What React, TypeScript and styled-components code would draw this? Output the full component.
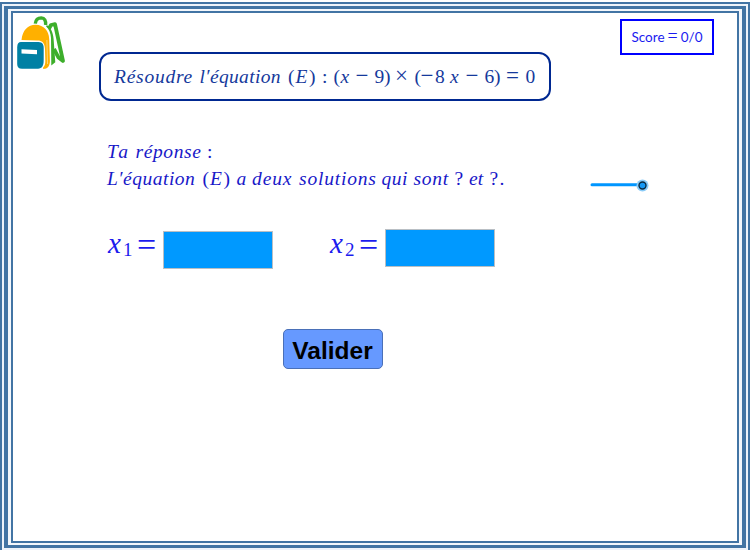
import React from "react";
import styled, { createGlobalStyle } from "styled-components";

const Global = createGlobalStyle`
  * { box-sizing: border-box; }
  body { margin: 0; background: #fff; overflow: hidden; }
`;

const OuterFrame = styled.div`
  width: 750px;
  height: 550px;
  padding-top: 2px;
  background: #fff;
`;
const OuterRule = styled.div`
  height: 548px;
  border: 2px solid #4274a4;
  border-bottom: 0;
  background: #eef3fa;
  padding: 2px 2px 0;
`;
const MiddleRule = styled.div`
  height: 542px;
  border: 4px solid #4274a4;
  border-top-width: 3px;
  border-bottom-width: 3px;
  background: #f3f7fc;
  padding: 2px 3px;
`;
const Page = styled.main`
  height: 532px;
  border: 2px solid #4274a4;
  background: #fff;
`;

const Header = styled.header`
  display: flex;
  align-items: flex-start;
  height: 121px;
`;
const Bag = styled.svg`
  width: 54px;
  height: 60px;
  flex: none;
`;
const Statement = styled.section`
  display: flex;
  align-items: center;
  width: 452px;
  height: 49px;
  margin: 39px 0 0 32px;
  padding: 0 0 3px 13px;
  border: 2px solid #002891;
  border-radius: 12px;
  color: #15399c;
  flex: none;
`;
const Score = styled.div`
  display: flex;
  justify-content: center;
  align-items: baseline;
  gap: 3px;
  width: 94px;
  height: 36px;
  margin: 6px 0 0 69px;
  border: 2px solid #0000ff;
  color: #1a1af0;
  font: 13.5px/30px Lato, sans-serif;
  white-space: nowrap;
`;
const ScoreSign = styled.span`
  font: 18px/30px "Liberation Serif", serif;
`;

const MathLine = styled.div`
  display: flex;
  align-items: baseline;
  height: 27px;
  font: italic 19.5px/27px "Liberation Serif", serif;
  white-space: nowrap;
`;
const Token = styled.span<{ $w: number; $ls?: number; $up?: boolean; $op?: boolean }>`
  flex: none;
  width: ${(p) => p.$w}px;
  letter-spacing: ${(p) => p.$ls ?? 0}px;
  font-style: ${(p) => (p.$up ? "normal" : "italic")};
  font-size: ${(p) => (p.$op ? 23 : 19.5)}px;
  margin-bottom: ${(p) => (p.$op ? -1 : 0)}px;
`;

const Answer = styled.section`
  display: flex;
  height: 62px;
  color: #1818c8;
`;
const AnswerText = styled.div`
  width: 577px;
  padding: 4px 0 0 94px;
`;
const Slider = styled.svg`
  width: 64px;
  height: 14px;
  margin-top: 44px;
`;

const Fields = styled.section`
  display: flex;
  height: 133px;
  padding: 32px 0 0 95px;
`;
const Field = styled.label<{ $w: number; $y: number; $rise: number }>`
  display: flex;
  width: ${(p) => p.$w}px;
  height: 38px;
  margin-top: ${(p) => p.$y}px;
  color: #1c1cee;
  font: italic 29px/29px "Liberation Serif", serif;

  > span {
    margin-top: -${(p) => p.$rise}px;
  }
`;
const Variable = styled.span`
  width: 15px;
`;
const Index = styled.span`
  width: 14px;
  padding-top: 8px;
  font: 19px/25px "Liberation Serif", serif;
`;
const Equals = styled.span`
  width: 26px;
  padding-top: 1px;
  font: 34px/29px "Liberation Serif", serif;
`;
const Entry = styled.input`
  width: 110px;
  height: 38px;
  padding: 0 6px;
  border: 1px solid #b9bfc4;
  border-radius: 0;
  outline: none;
  background: #0099ff;
  font: 20px "Liberation Sans", sans-serif;
`;
const Submit = styled.button`
  display: block;
  width: 100px;
  height: 40px;
  margin: 0 0 0 270px;
  padding: 4px 1px 0 0;
  border: 1px solid #4a70b8;
  border-radius: 5px;
  background: #6699ff;
  color: #000;
  font: bold 24.5px/34px "Liberation Sans", Arial, sans-serif;
`;

type Part = [text: string, width: number, spacing?: number, upright?: boolean];

const equation: Part[] = [
  ["Résoudre", 85.5, 0.75],
  ["l′équation", 88.5, 0.35],
  ["(", 7.5, 0, true],
  ["E", 13.5, 0],
  [")", 13, 0, true],
  [":", 11.5, 0, true],
  ["(", 7, 0, true],
  ["x", 15, 0],
  ["−", 19, 0, true],
  ["9", 9.5, 0, true],
  [")", 11, 0, true],
  ["×", 19.5, 0, true],
  ["(", 6, 0, true],
  ["−", 14.5, 0, true],
  ["8", 15, 0, true],
  ["x", 15.5, 0],
  ["−", 19, 0, true],
  ["6", 9.5, 0, true],
  [")", 12, 0, true],
  ["=", 19.5, 0, true],
  ["0", 10, 0, true],
];
const reply: Part[] = [
  ["Ta", 28.5, 2.2],
  ["réponse", 71.5, 0.6],
  [":", 8, 0, true],
];
const sentence: Part[] = [
  ["L′équation", 95.5, 0.5],
  ["(", 7.5, 0, true],
  ["E", 13.5, 0],
  [")", 13, 0, true],
  ["a", 15.5],
  ["deux", 47, 0.9],
  ["solutions", 82.5, 0.8],
  ["qui", 32, 0.5],
  ["sont", 41, 0.7],
  ["?", 14.5, 0, true],
  ["et", 20.5, 0.2],
  ["?", 10, 0, true],
  [".", 6, 0, true],
];

function MathText({ parts }: { parts: Part[] }) {
  return (
    <MathLine>
      {parts.map(([text, w, ls, up], i) => (
        <Token key={i} $w={w} $ls={ls} $up={up} $op={"−=×".includes(text)}>{text}</Token>
      ))}
    </MathLine>
  );
}

function Backpack() {
  return (
    <Bag viewBox="13 13 54 60">
      <path d="M35.3 23.6C35.8 19.5 38 17.9 41.3 17.9C44.6 18 46 20.5 45.6 25" fill="none" stroke="#3dae2b" strokeWidth="3.4" />
      <path d="M49 28.5L51 25L55 24.2L63 61L58.5 57.6L54 49" fill="none" stroke="#3dae2b" strokeWidth="3.8" strokeLinejoin="round" />
      <path d="M47 25.2C51 27.5 53.2 33 53.6 39L55.3 62.3L51.3 65.5L51 38C50.7 33 49 29 46 26.2Z" fill="#3dae2b" />
      <path d="M21.5 40C22.5 30 28 25 35.5 24.8C44 25 49 31 49.2 39L49.9 61C49.9 66 47.5 69 43.5 69L42.8 68C45 66 45.5 63 45.3 60L45 49C44.5 42.5 42 40.7 37.5 40.6Z" fill="#ffb000" />
      <path d="M46.9 40L47.5 64" stroke="#fff" strokeWidth=".8" opacity=".6" />
      <path d="M21 42H38.5C42.5 42.3 43.7 44.5 43.7 48V60C43.7 65.5 42 68.6 38 68.8H22C18.5 68.6 17.2 67 17.2 64V47C17.3 43.5 18.5 42.2 21 42Z" fill="#0080a4" />
      <path d="M21.5 49.2L37 50V54.2L21.5 53.5Z" fill="#fff" />
    </Bag>
  );
}

export default function App() {
  return (
    <>
      <Global />
      <OuterFrame><OuterRule><MiddleRule><Page>
        <Header>
          <Backpack />
          <Statement><MathText parts={equation} /></Statement>
          <Score>Score<ScoreSign>=</ScoreSign>0/0</Score>
        </Header>
        <Answer>
          <AnswerText>
            <MathText parts={reply} />
            <MathText parts={sentence} />
          </AnswerText>
          <Slider viewBox="0 0 64 14">
            <path d="M2 6.8H53" stroke="#0096ff" strokeWidth="3" strokeLinecap="round" />
            <circle cx="52.5" cy="7.5" r="6" fill="#8bccf8" />
            <circle cx="52.5" cy="7.5" r="3.5" fill="#1698f4" stroke="#092a43" strokeWidth="1.4" />
          </Slider>
        </Answer>
        <Fields>
          <Field $w={222} $y={3} $rise={2}>
            <Variable>x</Variable><Index>1</Index><Equals>=</Equals><Entry aria-label="x1" />
          </Field>
          <Field $w={170} $y={1} $rise={0}>
            <Variable>x</Variable><Index>2</Index><Equals>=</Equals><Entry aria-label="x2" />
          </Field>
        </Fields>
        <Submit>Valider</Submit>
      </Page></MiddleRule></OuterRule></OuterFrame>
    </>
  );
}
